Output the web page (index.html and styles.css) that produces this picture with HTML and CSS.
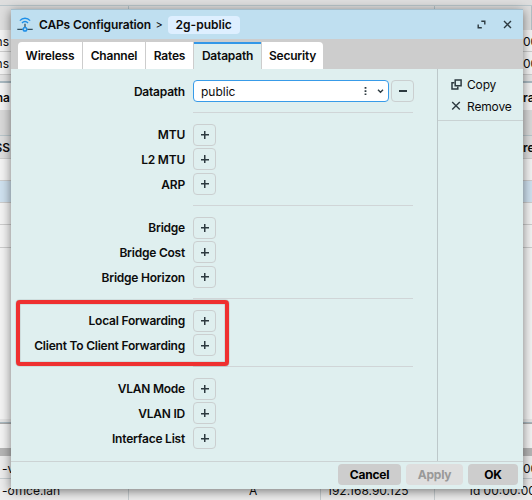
FILE: index.html
```
<!DOCTYPE html>
<html lang="en">
<head>
    <meta charset="utf-8">
    <title>CAPs Configuration</title>
    <link rel="stylesheet" href="styles.css">
</head>
<body>
    <div class="desktop">
        <div class="strip"></div>
        <div class="strip columns"><span></span><span></span><span></span></div>
        <div class="line"><span>ns</span><span>00</span></div>
        <div class="line"><span>ns</span><span>00</span></div>
        <div class="splitter"></div>
        <div class="line caption"><span>ha</span><span>rat</span></div>
        <div class="strip toolbar"></div>
        <div class="line heading"><span>SS</span><span>re</span></div>
        <div class="line"></div>
        <div class="line selected"></div>
        <div class="line"></div>
        <div class="line"></div>
        <div class="empty"></div>
        <div class="splitter thin"></div>
        <div class="status"></div>
        <div class="shade"></div>
        <div class="lease"><span>-v</span><span></span><span></span><span></span><span class="end">00</span></div>
        <div class="lease last"><span>-office.lan</span><span>A</span><span>192.168.90.125</span><span>1d 00:00:00</span></div>
    </div>

    <div class="dialog">
        <div class="titlebar">
            <svg class="logo" width="16" height="15" viewBox="0 0 16 15" fill="none">
                <path d="M2.9 3.6C5.7.4 10.3.4 13.1 3.6M5 5.9c1.7-1.8 4.3-1.8 6 0" stroke="#1e8fe8" stroke-width="1.4"/>
                <path d="M8 6.8v3.5M.3 12.3h5.5M10.2 12.3h5.5" stroke="#34505f" stroke-width="1.3"/>
                <circle cx="8" cy="12.2" r="1.8" stroke="#1e8fe8" stroke-width="1.5"/>
            </svg>
            <b>CAPs Configuration</b>
            <span class="arrow">&gt;</span>
            <span class="crumb">2g-public</span>
            <svg class="expand" width="9" height="9" viewBox="0 0 9 9" fill="none" stroke="#2d3a40" stroke-width="1.4">
                <path d="M4.3 1.2h3.5v3.3M1.2 4.4v3.4h3.6"/>
            </svg>
            <svg class="close" width="9" height="9" viewBox="0 0 9 9" stroke="#2d3a40" stroke-width="1.4">
                <path d="M1 1l7 7M8 1L1 8"/>
            </svg>
        </div>
        <div class="tabs">
            <div class="tab t1">Wireless</div>
            <div class="tab t2">Channel</div>
            <div class="tab t3">Rates</div>
            <div class="tab t4 active">Datapath</div>
            <div class="tab t5">Security</div>
        </div>
        <div class="content">
            <div class="form">
                <div class="group">
                    <div class="row">
                        <label>Datapath</label>
                        <div class="select">
                            <span>public</span>
                            <svg width="22" height="10" viewBox="0 0 22 10" fill="none">
                                <path d="M2.5 1v1.7M2.5 4.2v1.7M2.5 7.4v1.7" stroke="#2d3a40" stroke-width="1.8"/>
                                <path d="M15 3.7l2.5 2.5L20 3.7" stroke="#2d3a40" stroke-width="1.4"/>
                            </svg>
                        </div>
                        <button class="minus"></button>
                    </div>
                </div>
                <div class="group">
                    <div class="row"><label>MTU</label><button class="plus"></button></div>
                    <div class="row"><label>L2 MTU</label><button class="plus"></button></div>
                    <div class="row"><label>ARP</label><button class="plus"></button></div>
                </div>
                <div class="group">
                    <div class="row"><label>Bridge</label><button class="plus"></button></div>
                    <div class="row"><label>Bridge Cost</label><button class="plus"></button></div>
                    <div class="row"><label>Bridge Horizon</label><button class="plus"></button></div>
                </div>
                <div class="group">
                    <div class="row"><label>Local Forwarding</label><button class="plus"></button></div>
                    <div class="row"><label>Client To Client Forwarding</label><button class="plus"></button></div>
                </div>
                <div class="group">
                    <div class="row"><label>VLAN Mode</label><button class="plus"></button></div>
                    <div class="row"><label>VLAN ID</label><button class="plus"></button></div>
                    <div class="row"><label>Interface List</label><button class="plus"></button></div>
                </div>
            </div>
            <div class="side">
                <div class="actions">
                    <div class="action">
                        <svg width="11" height="11" viewBox="0 0 11 11" fill="none" stroke="#2d3a40" stroke-width="1.5">
                            <path d="M4.2 1h5.9v5.7H4.2zM3.2 3.8H1v6.1h5.8V7.7"/>
                        </svg>
                        <span>Copy</span>
                    </div>
                    <div class="action">
                        <svg width="11" height="11" viewBox="0 0 11 11" stroke="#2d3a40" stroke-width="1.4">
                            <path d="M1.2 1l7.6 7.6M8.8 1L1.2 8.6"/>
                        </svg>
                        <span>Remove</span>
                    </div>
                </div>
            </div>
        </div>
        <div class="footer">
            <button class="btn cancel">Cancel</button>
            <button class="btn apply" disabled>Apply</button>
            <button class="btn ok">OK</button>
        </div>
    </div>
    <div class="highlight"></div>
</body>
</html>
```

FILE: styles.css
```
* {
    box-sizing: border-box;
}
body {
    margin: 0;
    width: 532px;
    height: 500px;
    overflow: hidden;
    position: relative;
    font-family: Inter, "Liberation Sans", sans-serif;
    font-size: 12px;
    color: #0c0c0c;
}
button {
    font-family: inherit;
    padding: 0;
}

/* windows behind the dialog */
.desktop {
    height: 500px;
    background: #f3f3f3;
}
.strip {
    height: 6px;
    background: #dedede;
    border-bottom: 1px solid #b9c6cb;
}
.columns {
    height: 24px;
    display: grid;
    grid-template-columns: 129px 306px 1fr;
    border-bottom: 0;
}
.columns span {
    border-right: 1px solid #b3c0c5;
}
.line {
    height: 22.3px;
    display: flex;
    justify-content: space-between;
    align-items: center;
    padding-top: 2px;
    border-bottom: 1px solid #ccc;
    white-space: nowrap;
}
.line span {
    width: 9px;
    display: flex;
    justify-content: flex-end;
}
.line span:last-child {
    justify-content: flex-start;
}
.splitter {
    height: 8px;
    background: #e4e4e4;
    border-bottom: 2px solid #a9b9c1;
}
.caption {
    height: 27px;
    font-weight: 600;
    border: 0;
}
.caption span:first-child,
.heading span:first-child {
    width: 10px;
}
.toolbar {
    height: 26px;
    background: #d9d9d9;
}
.heading {
    height: 23px;
    background: #dedede;
    font-weight: 600;
}
.selected {
    background: #cfe1ef;
}
.empty {
    height: 171px;
}
.thin {
    height: 4px;
    border-width: 1px;
}
.status {
    height: 25px;
    border-top: 1px solid #aaa;
}
.shade {
    height: 8px;
    background: #b5b5b5;
}
.lease {
    height: 23px;
    display: grid;
    grid-template-columns: 129px 114px 78px 114px 1fr;
    background: #ececec;
    border-bottom: 1px solid #c5cccf;
    white-space: nowrap;
}
.last {
    grid-template-columns: 129px 192px 114px 1fr;
}
.lease span {
    height: 22px;
    padding: 5px 6px 0;
    border-right: 1px solid #c5cccf;
    line-height: 15px;
}
.lease span:first-child {
    padding-left: 2px;
}
.last span {
    padding-top: 4px;
}
.last span:nth-child(2) {
    padding-left: 120px;
}
.last span:nth-child(4) {
    padding-left: 33px;
}
.lease .end {
    padding-left: 88px;
}

/* dialog */
.dialog {
    position: absolute;
    left: 11px;
    top: 9px;
    width: 512px;
    height: 480px;
    display: flex;
    flex-direction: column;
    background: #dfefef;
    border-top: 1px solid #a3bdcb;
    box-shadow: 0 2px 10px rgba(0, 0, 0, 0.5);
}
.titlebar {
    height: 29px;
    display: flex;
    align-items: center;
    padding: 0 11px 0 6px;
    background: #bfdff0;
}
.titlebar b {
    margin-left: 6px;
    font-weight: 600;
    letter-spacing: -0.14px;
}
.arrow {
    margin: 0 5px 0 4.5px;
    font-size: 11px;
}
.crumb {
    height: 18px;
    width: 72px;
    text-align: center;
    line-height: 18px;
    border-radius: 4px;
    background: #deefff;
    font-weight: 600;
}
.expand {
    margin-left: auto;
}
.close {
    margin-left: 17px;
}
.tabs {
    height: 30px;
    display: flex;
    gap: 1px;
    padding: 3px 0 0 7px;
    background: #cdcdcd;
}
.tab {
    height: 27px;
    line-height: 28px;
    text-align: center;
    background: #fff;
    font-weight: 600;
    letter-spacing: -0.2px;
}
.t1 {
    width: 64px;
    border-radius: 4px 0 0 0;
}
.t2 {
    width: 62px;
}
.t3 {
    width: 47px;
}
.t4 {
    width: 67px;
}
.t5 {
    width: 61px;
    border-radius: 0 4px 0 0;
}
.active {
    background: #dfefef;
    border-top: 2px solid #3498e8;
    line-height: 24px;
}
.content {
    flex: 1;
    display: flex;
}
.form {
    width: 426px;
    padding-top: 11.2px;
}
.group {
    display: flex;
    flex-direction: column;
    gap: 2.8px;
}
.group:not(:last-child)::after {
    content: "";
    height: 1px;
    margin: 7.4px 24px 10.2px 182px;
    background: #d0d5d7;
}
.row {
    height: 22px;
    display: flex;
    align-items: center;
}
.row label {
    width: 174px;
    margin-right: 8px;
    text-align: right;
    font-weight: 600;
    letter-spacing: -0.22px;
}
.select {
    width: 196px;
    height: 22px;
    display: flex;
    align-items: center;
    justify-content: space-between;
    padding: 0 3px 0 7px;
    background: #fff;
    border: 1px solid #389be8;
    border-radius: 4px;
}
.plus,
.minus {
    width: 23px;
    height: 22px;
    display: grid;
    place-items: center;
    border: 1px solid #cbcfd0;
    border-radius: 4px;
    background: none;
}
.minus {
    margin-left: 2px;
}
.plus::before,
.minus::before {
    content: "";
    width: 8px;
    height: 8px;
    background: linear-gradient(#2d3a40, #2d3a40) center / 8px 1.5px no-repeat,
        linear-gradient(#2d3a40, #2d3a40) center / 1.5px 8px no-repeat;
}
.minus::before {
    height: 2px;
    background: #2d3a40;
}
.side {
    flex: 1;
    border-left: 1px solid #bdc8ca;
}
.actions {
    height: 52px;
    padding: 5px 0 0 13px;
    border-bottom: 1px solid #c9d2d3;
}
.action {
    height: 21.5px;
    display: flex;
    align-items: center;
    gap: 5px;
    letter-spacing: -0.15px;
}
.footer {
    height: 28px;
    display: flex;
    gap: 5px;
    justify-content: flex-end;
    padding: 2px 5px 0 0;
    border-top: 1px solid #ccd3d4;
}
.btn {
    height: 21px;
    border: 0;
    border-radius: 4px;
    background: #cdcdcd;
    color: #000;
    font-size: 12px;
    font-weight: 700;
    letter-spacing: -0.2px;
}
.cancel {
    width: 63px;
}
.apply {
    width: 57px;
    background: #dedede;
    color: #999;
}
.ok {
    width: 50px;
}

/* red marker over the two forwarding rows */
.highlight {
    position: absolute;
    left: 16px;
    top: 300px;
    width: 213px;
    height: 66px;
    border: 4px solid #ef3030;
    border-radius: 4px;
    box-shadow: 0 0 1px #444, inset 0 0 1px #444;
}
```
